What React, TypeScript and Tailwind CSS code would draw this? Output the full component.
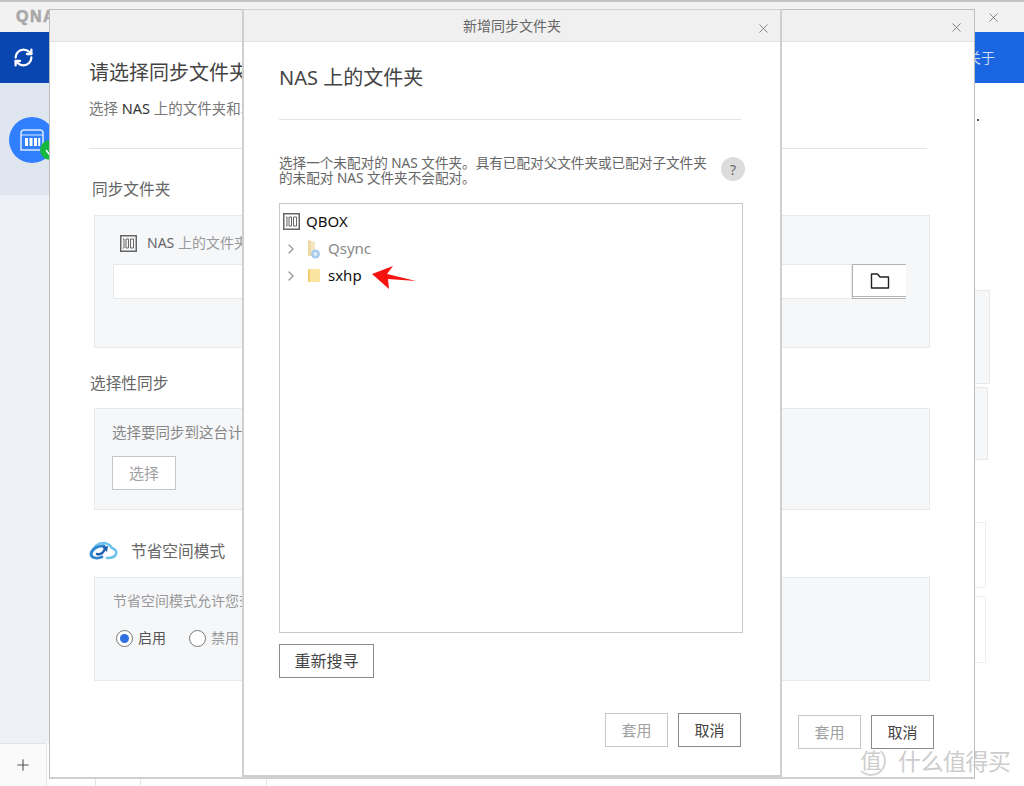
import { RefreshCw, X, Plus, ChevronRight } from "lucide-react";

const font = "font-['Noto_Sans','Noto_Sans_CJK_SC',sans-serif]";

function NasIcon() {
  return (
    <svg width="17" height="17" viewBox="0 0 17 17" fill="none" stroke="#666" className="shrink-0">
      <rect x="0.75" y="0.75" width="15.500" height="15.500" strokeWidth="1.5" />
      <path d="M3 4h1v9H3M6 4h2.500v9H6zM10.500 4h3v9h-3z" strokeWidth="1" />
    </svg>
  );
}

function Btn({ children, active, className = "" }: { children: string; active?: boolean; className?: string }) {
  return (
    <div
      className={`flex items-center justify-center h-[34px] bg-white border ${
        active ? "border-[#8a8a8a] text-[#444]" : "border-[#c4c8cc] text-[#a0a0a0]"
      } ${className}`}
    >
      {children}
    </div>
  );
}

function Header({ title, closeClass }: { title?: string; closeClass: string }) {
  return (
    <div className="relative flex items-center justify-center h-[32px] shrink-0 bg-[#f0f0f0] border-b border-[#e2e2e2] text-[14px] text-[#666]">
      {title}
      <X size={15} strokeWidth={1.4} color="#777" className={`absolute ${closeClass}`} />
    </div>
  );
}

function Panel({ className, children }: { className: string; children?: React.ReactNode }) {
  return <div className={`bg-[#f6f7f9] border border-[#e8e9eb] ${className}`}>{children}</div>;
}

function BackWindow() {
  return (
    <div className="absolute inset-0 flex flex-col bg-white border-t-2 border-[#c4c4c4]">
      <div className="flex items-center justify-between h-[30px] bg-[#f2f2f2] pl-[16px] pr-[27px]">
        <span className="text-[16px] font-bold tracking-[1.5px] text-[#a8a8a8] [-webkit-text-stroke:0.6px_#a8a8a8] font-['Liberation_Sans',sans-serif]">QNAP</span>
        <X size={15} strokeWidth={1.4} color="#777" className="-mr-[4px]" />
      </div>
      <div className="flex h-[51px] bg-[#1a66e0]">
        <div className="flex items-center justify-center w-[49px] pr-[3px] bg-[#0a46b0]">
          <RefreshCw size={21} strokeWidth={2.6} color="white" />
        </div>
        <div className="flex-1 flex items-center justify-end pr-[29px] text-[14px] text-[#cfdcf6]">关于</div>
      </div>
      <div className="flex flex-1">
        <div className="flex flex-col w-[49px]">
          <div className="h-[112px] bg-[#dfe6f0] pt-[34px] pl-[9px]">
            <div className="relative flex items-center justify-center size-[46px] rounded-full bg-[#2f7fff]">
              <svg width="24" height="22" viewBox="0 0 24 22" fill="none">
                <path d="M1 21V4a3 3 0 0 1 3-3h16a3 3 0 0 1 3 3v17z" stroke="#dbe9ff" strokeWidth="1.5" />
                <path d="M1 6h22" stroke="#dbe9ff" strokeWidth="1" />
                <path d="M5 9h3v8H5zM9.500 9h3v8h-3zM14 9h3v8h-3zM18.200 9h2v8h-2z" fill="white" />
              </svg>
              <div className="absolute left-[31px] top-[23px] flex items-center justify-center size-[20px] rounded-full bg-[#14b83c]">
                <svg width="10" height="10" viewBox="0 0 10 10" fill="none" stroke="white" strokeWidth="1.5">
                  <path d="M1 5l3 4 5-8" />
                </svg>
              </div>
            </div>
          </div>
          <div className="flex-1 bg-[#eef2f8]" />
          <div className="flex items-center justify-center w-[47px] h-[43px] bg-[#fafafa] border-t border-r border-[#e4e4e4]">
            <Plus size={18} strokeWidth={1.5} color="#555" />
          </div>
        </div>
        <div className="flex-1 flex flex-col items-end pt-[36px] pr-[45px]">
          <div className="size-[2px] bg-[#555]" />
        </div>
      </div>
      {/* panels peeking out on the right of the dialogs */}
      <div className="absolute left-[975px] top-[288px] w-[15px] h-[94px] bg-[#f6f7f9] border border-[#e8e9eb] border-l-0" />
      <div className="absolute left-[975px] top-[385px] w-[13px] h-[73px] bg-[#f6f7f9] border border-[#e8e9eb] border-l-0" />
      <div className="absolute left-[975px] top-[520px] w-[11px] h-[66px] border border-[#eeeeee] border-l-0" />
      <div className="absolute left-[975px] top-[594px] w-[11px] h-[67px] border border-[#eeeeee] border-l-0" />
      {/* list dividers under the dialogs */}
      <div className="absolute left-[95px] top-[776px] w-px h-[8px] bg-[#e4e4e4]" />
      <div className="absolute left-[140px] top-[776px] w-px h-[8px] bg-[#e4e4e4]" />
      <div className="absolute left-[266px] top-[776px] w-px h-[8px] bg-[#e4e4e4]" />
    </div>
  );
}

function SyncWindow() {
  return (
    <div className="absolute left-[49px] top-[9px] w-[926px] h-[770px] flex flex-col bg-white border border-[#bdbdbd] border-b-[2px] border-b-[#cfcfcf]">
      <Header closeClass="right-[10px] top-[10px]" />
      <div className="flex flex-col pl-[39px] pr-[47px]">
        <div className="mt-[17px] text-[20px] leading-[28px] text-[#444]">请选择同步文件夹</div>
        <div className="mt-[11px] text-[14.500px] leading-[20px] text-[#777]">
          选择 <span className="text-[#333]">NAS</span> 上的文件夹和本地文件夹
        </div>
        <div className="mt-[30px] h-px bg-[#e4e4e4]" />
        <div className="mt-[29px] ml-[3px] text-[15.700px] leading-[22px] text-[#666]">同步文件夹</div>
        <Panel className="relative mt-[15px] ml-[5px] -mr-[3px] h-[133px] pl-[25px] pt-[17px]">
          <div className="flex items-center gap-[10px] text-[14px] leading-[20px] text-[#999]">
            <NasIcon />
            <span>
              <span className="text-[#666]">NAS</span> 上的文件夹
            </span>
          </div>
          <div className="flex mt-[11px] -ml-[7px] w-[793px] h-[35px]">
            <div className="flex-1 bg-white border border-[#e8e9eb]" />
            <div className="flex items-center justify-center w-[54px] bg-white border border-[#b4b4b4] border-b-[3px] border-double border-r-0">
              <svg width="20" height="18" viewBox="0 0 20 18" fill="none" stroke="#222" strokeWidth="1.4">
                <path d="M1.500 2h6l2.500 3h8.500v11h-17z" strokeLinejoin="round" />
              </svg>
            </div>
          </div>
        </Panel>
        <div className="mt-[24px] ml-[1px] text-[15.700px] leading-[22px] text-[#666]">选择性同步</div>
        <Panel className="mt-[14px] ml-[5px] -mr-[3px] h-[102px] pl-[17px] pt-[13px]">
          <div className="text-[14.500px] leading-[20px] text-[#888]">选择要同步到这台计算机的文件夹</div>
          <Btn className="mt-[14px] w-[64px] text-[15px]">选择</Btn>
        </Panel>
        <div className="flex items-center gap-[13px] mt-[30px] h-[22px]">
          <svg width="29" height="20" viewBox="0 0 29 20" fill="none" className="shrink-0">
            <path d="M3 12C4 6 9 2 14 2c4 0 7 2 9 5 3 1 5 3 4 6-1 3-5 4-9 4" stroke="#6cc2ee" strokeWidth="2.500" strokeLinecap="round" />
            <path d="M15 5C9 4 2 9 2 13c0 4 6 5 11 3" stroke="#2f86d0" strokeWidth="2.800" strokeLinecap="round" />
            <path d="M8 13c3 1 6-1 8-5" stroke="#1f5fae" strokeWidth="2.500" strokeLinecap="round" />
            <path d="M13 6l6-1-1 6z" fill="#1f5fae" />
          </svg>
          <span className="text-[15.700px] leading-[22px] text-[#666]">节省空间模式</span>
        </div>
        <Panel className="mt-[15px] ml-[5px] -mr-[3px] h-[104px] pl-[21px] pt-[13px]">
          <div className="-ml-[3px] text-[14px] leading-[20px] text-[#999]">节省空间模式允许您查看所有文件</div>
          <div className="flex items-center mt-[17px] text-[14px] leading-[20px]">
            <span className="flex items-center justify-center size-[17px] rounded-full border-[1.5px] border-[#777] bg-white">
              <span className="size-[9px] rounded-full bg-[#2f6fe0]" />
            </span>
            <span className="ml-[5px] text-[#555]">启用</span>
            <span className="ml-[23px] size-[17px] rounded-full border-[1.5px] border-[#777] bg-white" />
            <span className="ml-[5px] text-[#999]">禁用</span>
          </div>
        </Panel>
      </div>
      <div className="flex justify-end gap-[10px] mt-[34px] pr-[40px]">
        <Btn className="w-[63px] text-[15px]">套用</Btn>
        <Btn active className="w-[63px] text-[15px]">取消</Btn>
      </div>
    </div>
  );
}

function FolderDialog() {
  return (
    <div className="absolute left-[242px] top-[9px] w-[540px] h-[768px] flex flex-col bg-white border-2 border-t border-[#cfcfcf]">
      <Header title="新增同步文件夹" closeClass="right-[9px] top-[11px]" />
      <div className="flex flex-col flex-1 pl-[35px] pr-[39px]">
        <div className="mt-[21px] text-[20px] leading-[30px] text-[#444]">NAS 上的文件夹</div>
        <div className="mt-[26px] h-px bg-[#e4e4e4]" />
        <div className="flex items-start justify-between mt-[35px] -mr-[4px]">
          <div className="w-[432px] text-[13.600px] leading-[15px] text-[#666]">
            选择一个未配对的 NAS 文件夹。具有已配对父文件夹或已配对子文件夹的未配对 NAS 文件夹不会配对。
          </div>
          <div className="flex items-center justify-center size-[24px] mt-[2px] rounded-full bg-[#dcdcdc] text-[14px] text-[#666]">?</div>
        </div>
        <div className="mt-[18px] -mr-[2px] h-[430px] border border-[#c8c8c8] pl-[3px] pt-[7px]">
          <div className="flex items-center gap-[6px] h-[20px] text-[15px] text-[#111]">
            <NasIcon />
            QBOX
          </div>
          <div className="flex items-center h-[27px] mt-[4px] text-[15px] text-[#888]">
            <ChevronRight size={16} strokeWidth={2} color="#999" />
            <svg width="14" height="20" viewBox="0 0 14 20" className="ml-[8px] mr-[7px]">
              <path d="M1 1l7 2v14H1z" fill="#f5e6bd" />
              <path d="M1 1l3 1v15H1z" fill="#ecd9a6" />
              <circle cx="8.500" cy="15" r="4.500" fill="#a6cbec" />
              <circle cx="8.500" cy="15" r="2" fill="#dcecf9" />
            </svg>
            Qsync
          </div>
          <div className="flex items-center h-[27px] text-[15px] text-[#111]">
            <ChevronRight size={16} strokeWidth={2} color="#999" />
            <svg width="14" height="15" viewBox="0 0 14 15" className="ml-[8px] mr-[7px]">
              <path d="M1 1h12v13H1z" fill="#fbe49f" />
              <path d="M1 1h2v13H1z" fill="#f3cf72" />
            </svg>
            sxhp
            <svg width="46" height="26" viewBox="0 0 46 26" className="ml-[9px] mt-[3px]">
              <path d="M1 10L22 2L16 10L45 17L17 15L18 25Z" fill="#f5120f" />
            </svg>
          </div>
        </div>
        <Btn active className="mt-[11px] w-[95px] text-[16px]">重新搜寻</Btn>
        <div className="flex justify-end gap-[10px] mt-[35px]">
          <Btn className="w-[63px] text-[15px]">套用</Btn>
          <Btn active className="w-[63px] text-[15px]">取消</Btn>
        </div>
      </div>
    </div>
  );
}

function Watermark() {
  return (
    <div className="absolute left-[856px] top-[746px] flex items-center gap-[12px] text-[#cdcdcd]">
      <div className="flex items-center justify-center size-[30px] rounded-full border-[2px] border-[#d4d4d4] border-l-transparent border-t-transparent text-[21px]">值</div>
      <div className="text-[23px] leading-[30px] tracking-[-0.5px]">什么值得买</div>
    </div>
  );
}

export default function App() {
  return (
    <div className={`relative w-[1024px] h-[786px] overflow-hidden bg-white ${font}`}>
      <BackWindow />
      <SyncWindow />
      <FolderDialog />
      <Watermark />
    </div>
  );
}
